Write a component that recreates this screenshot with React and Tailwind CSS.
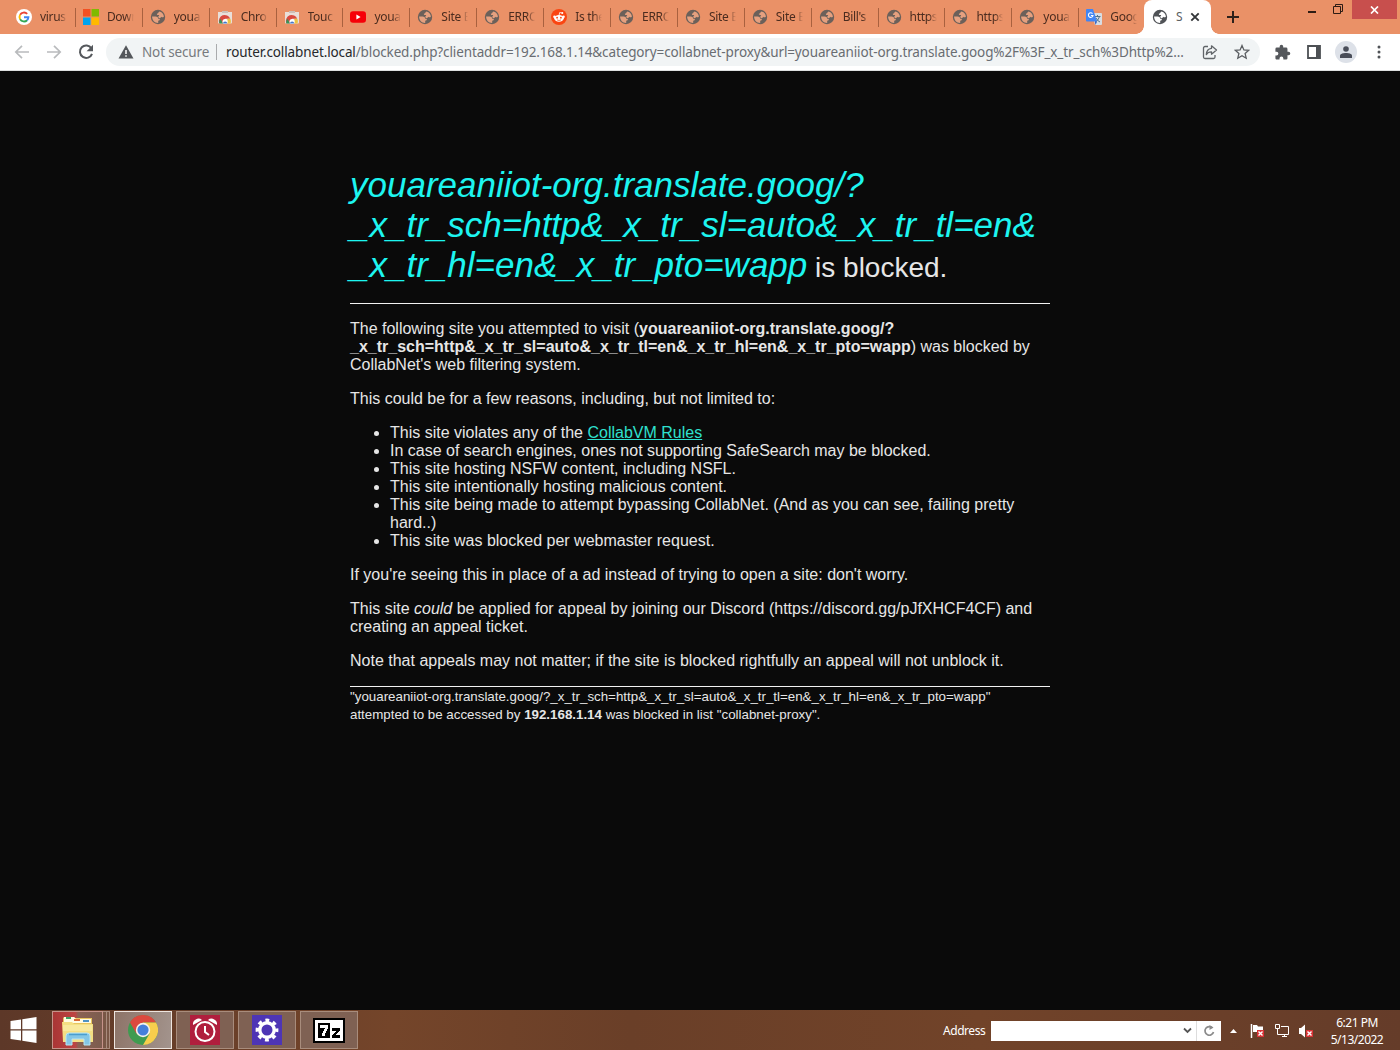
import React from "react";

const UI = "font-['Noto_Sans','Open_Sans',sans-serif]";

const GoogleG = () => (
  <svg width="16" height="16" viewBox="0 0 16 16"><circle cx="8" cy="8" r="8" fill="#fff" />
    <g fill="none" strokeWidth="1.9"><path d="M11.2 4.9A4.5 4.5 0 0 0 4.1 5.8" stroke="#ea4335" /><path d="M4.1 5.8a4.5 4.5 0 0 0 0 4.4" stroke="#fbbc05" /><path d="M4.1 10.2a4.5 4.5 0 0 0 7 1" stroke="#34a853" /><path d="M11.1 11.2A4.3 4.3 0 0 0 12.4 8.3H8" stroke="#4285f4" /></g>
  </svg>
);
const Microsoft = () => (
  <svg width="16" height="16" viewBox="0 0 16 16"><path d="M0 0h7.5v7.5H0z" fill="#f25022" /><path d="M8.5 0H16v7.5H8.5z" fill="#7fba00" /><path d="M0 8.5h7.5V16H0z" fill="#00a4ef" /><path d="M8.5 8.5H16V16H8.5z" fill="#ffb900" /></svg>
);
const Globe = ({ dark }) => (
  <svg width="16" height="16" viewBox="0 0 16 16">
    <circle cx="8" cy="8" r="7.2" fill={dark ? "#505357" : "#6b605a"} />
    <path d="M9.600 2.400C12.200 3 13.800 5.200 13.900 7.700c-.9.8-1.900.9-2.500.1-.7.9-1.700 1.700-2.700 1-.5-.5-.6-1.100-.1-1.700 1-.5.7-1.200-.4-1.200-.8.100-1.500-.3-1.300-1.200.9-.1 1.500-.5 1.500-1.200.1-.6.6-.9 1.200-1.100z" fill={dark ? "#fff" : "#e5a07f"} />
    <path d="M2.100 7.500h3.500c1.500 0 2.500.9 2.600 2.200h1.600c.3 1.300-.5 1.900-1.600 2v2.200C4.900 14 2 11.400 2.100 7.500z" fill={dark ? "#fff" : "#e5a07f"} />
  </svg>
);
const WebStore = () => (
  <svg width="16" height="16" viewBox="0 0 16 16"><path d="M1 3h14v10.500a1 1 0 0 1-1 1H2a1 1 0 0 1-1-1z" fill="#e9dfda" /><path d="M5 2h6v2H5z" fill="#cdbfb8" /><path d="M2.300 13.900a5.800 5.800 0 0 1 10.900-4.200H8.100l-2 4.200z" fill="#d94a40" /><path d="M2.300 14.500c-.2-2 .2-3.500 1.100-4.700l2.600 4.700z" fill="#36965a" /><path d="M13.300 9.700c.7 1.500.7 3.200.2 4.800H9.500l1-4.800z" fill="#edc241" /><circle cx="8.100" cy="12.500" r="2.600" fill="#fff" /><path d="M6 14.500a2.100 2.100 0 1 1 4.200 0z" fill="#4676c9" /></svg>
);
const YouTube = () => (
  <svg width="16" height="16" viewBox="0 0 16 16"><rect x="0" y="2.300" width="16" height="11.500" rx="3" fill="#f60008" /><path d="M6.400 5.600v4.900L10.600 8z" fill="#fff" /></svg>
);
const Reddit = () => (
  <svg width="16" height="16" viewBox="0 0 16 16"><circle cx="8" cy="8" r="8" fill="#fa4512" /><path d="M8 6.500l.7-3 2.300.5" stroke="#fff" strokeWidth=".8" fill="none" /><circle cx="11.300" cy="4" r="1" fill="#fff" /><circle cx="3.500" cy="7.700" r="1.300" fill="#fff" /><circle cx="12.500" cy="7.700" r="1.300" fill="#fff" /><ellipse cx="8" cy="9.300" rx="4.800" ry="3.400" fill="#fff" /><circle cx="6.100" cy="8.700" r=".9" fill="#fa4512" /><circle cx="9.900" cy="8.700" r=".9" fill="#fa4512" /><path d="M6 10.900q2 1.200 4 0" fill="none" stroke="#fa4512" strokeWidth=".7" /></svg>
);
const Translate = () => (
  <svg width="16" height="16" viewBox="0 0 16 16"><path d="M6 4h9a1 1 0 0 1 1 1v10a1 1 0 0 1-1 1H9z" fill="#d8dde3" /><path d="M8.500 7.500h6M11.500 6v1.500M13.500 7.500q-1 4-4 5M10 9q1.500 3 4 4" stroke="#55758c" fill="none" /><path d="M1 0h6l4 12.500H1a1 1 0 0 1-1-1V1a1 1 0 0 1 1-1z" fill="#4285f4" /><path d="M9 12.500h2L9.500 16z" fill="#2055c0" /><path d="M6.500 4.600A2.300 2.300 0 1 0 7 6.500H4.900" stroke="#fff" fill="none" strokeWidth="1.100" /></svg>
);

const tabs = [
  ["virus", GoogleG], ["Down", Microsoft], ["youa", Globe], ["Chro", WebStore], ["Touc", WebStore], ["youa", YouTube],
  ["Site B", Globe], ["ERRO", Globe], ["Is the", Reddit], ["ERRO", Globe], ["Site B", Globe], ["Site B", Globe],
  ["Bill's", Globe], ["https", Globe], ["https", Globe], ["youa", Globe], ["Goog", Translate],
];

function TabStrip() {
  return (
    <div className="flex h-[34px] bg-[#ea9167] pl-2">
      <div className="flex w-[1136px]">
        {tabs.map(([label, Icon], i) => (
          <div key={i} className="relative flex w-[66.900px] shrink-0 items-center pl-2 last:w-[64px]">
            <span className="h-4 w-4 shrink-0"><Icon /></span>
            <span className="ml-2 w-[27px] overflow-hidden text-[12px] leading-4 tracking-[-0.300px] whitespace-nowrap text-[#4b2c1f] [mask-image:linear-gradient(to_right,black_70%,transparent)]">{label}</span>
            {i < 16 && <span className="absolute -right-px top-2 h-[19px] w-px bg-[#a9613f]" />}
          </div>
        ))}
      </div>
      <div className="relative flex h-[34px] w-[67px] items-center rounded-t-lg bg-white pl-2">
        <span className="absolute bottom-0 -left-2 h-2 w-2 bg-[radial-gradient(circle_at_0_0,transparent_7.5px,white_8px)]" />
        <span className="absolute bottom-0 -right-2 h-2 w-2 bg-[radial-gradient(circle_at_100%_0,transparent_7.5px,white_8px)]" />
        <Globe dark />
        <span className="ml-2 w-[9px] text-[12px] leading-4 text-[#5c5f63]">S</span>
        <svg className="ml-[5px]" width="10" height="10" viewBox="0 0 10 10"><path d="M1.300 1.300l7.400 7.400M8.700 1.300L1.300 8.700" stroke="#333639" strokeWidth="1.900" /></svg>
      </div>
      <svg className="mt-[11px] ml-4" width="12" height="12" viewBox="0 0 12 12"><path d="M6 0v12M0 6h12" stroke="#2e211b" strokeWidth="2" /></svg>
      <div className="ml-[68px] flex">
        <svg className="mt-[11px]" width="10" height="3"><path d="M1 1h8" stroke="#2e1c14" strokeWidth="2" /></svg>
        <svg className="mt-1 ml-4" width="11" height="11" viewBox="0 0 11 11" fill="none" stroke="#2e1c14"><path d="M.5 2.500h7v7h-7zM2.500 2.500v-2h7v7h-2" /></svg>
      </div>
      <div className="ml-[8px] flex h-[19px] w-[45px] items-center justify-center bg-[#c84f4d]">
        <svg width="9" height="8" viewBox="0 0 9 8"><path d="M1 .5l7 7M8 .5l-7 7" stroke="#fff" strokeWidth="1.700" /></svg>
      </div>
    </div>
  );
}

function Toolbar() {
  return (
    <div className="flex h-[37px] items-center border-b border-[#dde0e0] bg-white">
      <svg className="ml-[14px]" width="16" height="16" viewBox="0 0 16 16" fill="none" stroke="#b9bbbd" strokeWidth="1.700"><path d="M15 8H2M8 1.800L1.800 8 8 14.200" /></svg>
      <svg className="ml-4" width="16" height="16" viewBox="0 0 16 16" fill="none" stroke="#b9bbbd" strokeWidth="1.700"><path d="M1 8h13M8 1.800L14.200 8 8 14.200" /></svg>
      <svg className="ml-4" width="16" height="16" viewBox="0 0 16 16"><path d="M13.400 4.400A6.200 6.200 0 1 0 14 9.800" fill="none" stroke="#55585c" strokeWidth="2" /><path d="M15 .8v6.400H8.600z" fill="#55585c" /></svg>
      <div className="ml-3 flex h-7 w-[1154px] items-center rounded-full bg-[#f1f4f5] pl-3">
        <svg width="16" height="14" viewBox="0 0 16 14"><path d="M8 .3L15.500 13.500H.5z" fill="#54575b" /><path d="M8 5v4M8 10.200v1.600" stroke="#fff" strokeWidth="1.500" /></svg>
        <span className="ml-2 w-[67px] pt-px text-[13.500px] tracking-[-0.150px] whitespace-nowrap text-[#777a7e]">Not secure</span>
        <span className="ml-[7px] h-4 w-px bg-[#a9abad]" />
        <span className="ml-[9px] w-[960px] pt-px text-[13.500px] tracking-[-0.125px] whitespace-nowrap text-[#696d72]"><span className="text-[#27292c]">router.collabnet.local</span>/blocked.php?clientaddr=192.168.1.14&amp;category=collabnet-proxy&amp;url=youareaniiot-org.translate.goog%2F%3F_x_tr_sch%3Dhttp%2...</span>
        <svg className="ml-4" width="16" height="16" viewBox="0 0 16 16" fill="none" stroke="#606468" strokeWidth="1.300"><path d="M6 2.500H3a1.500 1.500 0 0 0-1.500 1.500v9A1.500 1.500 0 0 0 3 14.500h8.500A1.500 1.500 0 0 0 13 13v-2" /><path d="M9.500 1.800l5 4.200-5 4.200V7.800Q6 7.700 4.300 10.600 4.500 5 9.500 4.300z" strokeLinejoin="round" /></svg>
        <svg className="ml-4" width="16" height="16" viewBox="0 0 16 16"><path d="M8 1.500l1.900 4.400 4.800.4-3.600 3.200 1.100 4.700L8 11.700l-4.200 2.500 1.100-4.700-3.600-3.200 4.800-.4z" fill="none" stroke="#5b5e62" strokeWidth="1.300" /></svg>
      </div>
      <svg className="ml-[14px]" width="17" height="17" viewBox="0 0 24 24" fill="#55585c"><path d="M20.500 11H19V7a2 2 0 0 0-2-2h-4V3.500a2.500 2.500 0 0 0-5 0V5H4a2 2 0 0 0-2 2v3.800h1.500a2.700 2.700 0 0 1 0 5.400H2V20c0 1.100.9 2 2 2h3.800v-1.500a2.700 2.700 0 0 1 5.400 0V22H17a2 2 0 0 0 2-2v-4h1.500a2.500 2.500 0 0 0 0-5z" /></svg>
      <svg className="ml-4" width="14" height="14" viewBox="0 0 14 14"><path d="M1 1h12v12H1z" fill="none" stroke="#4d5054" strokeWidth="1.800" /><path d="M9 1h4v12H9z" fill="#4d5054" /></svg>
      <span className="ml-[14px] flex h-[22px] w-[22px] items-center justify-center rounded-full bg-[#dde1e8]">
        <svg width="12" height="12" viewBox="0 0 12 12" fill="#4a4e59"><circle cx="6" cy="3" r="2.800" /><path d="M0 12V9.700C0 7.800 3 7 6 7s6 .8 6 2.700V12z" /></svg>
      </span>
      <svg className="ml-5" width="4" height="14" viewBox="0 0 4 14" fill="#505357"><circle cx="2" cy="2" r="1.500" /><circle cx="2" cy="7" r="1.500" /><circle cx="2" cy="12" r="1.500" /></svg>
    </div>
  );
}

function BlockedPage() {
  return (
    <main className="h-[939px] bg-[#0a0a0a] pt-[94px] font-['Liberation_Sans',Arial,sans-serif] text-[16px] leading-[18px] text-[#e6e6e6]">
      <div className="mx-auto w-[700px]">
        <h1 className="text-[35px] leading-[40px] whitespace-nowrap"><em className="text-[#1df5f0]">youareaniiot-org.translate.goog/?<br />_x_tr_sch=http&amp;_x_tr_sl=auto&amp;_x_tr_tl=en&amp;<br />_x_tr_hl=en&amp;_x_tr_pto=wapp</em><span className="text-[28px] leading-none"> is blocked.</span></h1>
        <hr className="mt-[18px] border-t border-[#f2f2f2]" />
        <p className="mt-4 whitespace-nowrap">The following site you attempted to visit (<b>youareaniiot-org.translate.goog/?<br />_x_tr_sch=http&amp;_x_tr_sl=auto&amp;_x_tr_tl=en&amp;_x_tr_hl=en&amp;_x_tr_pto=wapp</b>) was blocked by<br />CollabNet's web filtering system.</p>
        <p className="mt-4">This could be for a few reasons, including, but not limited to:</p>
        <ul className="mt-4 list-disc pl-10">
          <li>This site violates any of the <a className="text-[#2fe0cf] underline">CollabVM Rules</a></li>
          <li>In case of search engines, ones not supporting SafeSearch may be blocked.</li>
          <li>This site hosting NSFW content, including NSFL.</li>
          <li>This site intentionally hosting malicious content.</li>
          <li>This site being made to attempt bypassing CollabNet. (And as you can see, failing pretty<br />hard..)</li>
          <li>This site was blocked per webmaster request.</li>
        </ul>
        <p className="mt-4">If you're seeing this in place of a ad instead of trying to open a site: don't worry.</p>
        <p className="mt-4">This site <em>could</em> be applied for appeal by joining our Discord (https://discord.gg/pJfXHCF4CF) and<br />creating an appeal ticket.</p>
        <p className="mt-4">Note that appeals may not matter; if the site is blocked rightfully an appeal will not unblock it.</p>
        <hr className="mt-4 border-t border-[#f2f2f2]" />
        <p className="mt-px text-[13.333px] whitespace-nowrap">"youareaniiot-org.translate.goog/?_x_tr_sch=http&amp;_x_tr_sl=auto&amp;_x_tr_tl=en&amp;_x_tr_hl=en&amp;_x_tr_pto=wapp"<br />attempted to be accessed by <b>192.168.1.14</b> was blocked in list "collabnet-proxy".</p>
      </div>
    </main>
  );
}

const TaskButton = ({ children, active }) => (
  <div className={active ? "flex h-[38px] w-[58px] items-center justify-center border border-[#eee5df] bg-[linear-gradient(100deg,#8d7468,#a3948d)]" : "flex h-[38px] w-[58px] items-center justify-center border border-[#a88c7c] bg-[#7f6153]"}>{children}</div>
);

function Taskbar() {
  return (
    <footer className="flex h-10 items-center bg-[#693f2a] bg-[linear-gradient(90deg,#5d3828,#74452a_28%,#6a3f28_45%,#714329_70%,#653c29)]">
      <svg className="ml-[10px]" width="27" height="26" viewBox="0 0 27 26" fill="#fff"><path d="M.5 4L11 2.400V12.300H.5zM12.300 2.200L26.500 0v12.300H12.300zM.5 13.500H11v10L.5 22zM12.300 13.500h14.200V26l-14.200-2.200z" /></svg>
      <div className="ml-[15px] flex h-[38px] w-[58px]">
        <div className="flex w-[51px] items-center justify-center border border-[#c5938a] bg-[linear-gradient(90deg,#a93635,#bd4442_45%,#8a6253_52%,#7c5c4e)]">
          <svg width="34" height="32" viewBox="0 0 34 32"><path d="M2 4l1-1h10l1 1h17v24H2z" fill="#e8c65e" /><path d="M3 3h10l2 2h15v4H3z" fill="#fffbe3" /><path d="M5 3h5v2H5z" fill="#3da363" /><path d="M13 5h6v2h-6z" fill="#d96a34" /><path d="M22 6h6v2h-6z" fill="#4d92c4" /><path d="M1 8h10l2 2h19v18H2z" fill="#f4df83" /><path d="M2 11h29v6H2z" fill="#f8e99d" /><path d="M5 31V22q0-3 3-3h18q3 0 3 3v9h-6v-6H11v6z" fill="#83c6e6" stroke="#b9e5f2" /><path d="M8 20.500h18" stroke="#4a9dce" strokeWidth="1.500" /></svg>
        </div>
        <div className="w-1 border-y border-r border-[#a98c7d] bg-[#795746]" />
        <div className="w-[3px] border-y border-r border-[#a98c7d] bg-[#795746]" />
      </div>
      <div className="ml-1 flex gap-1">
        <TaskButton active>
          <svg width="30" height="30" viewBox="0 0 30 30"><circle cx="15" cy="15" r="15" fill="#3f9b50" /><path d="M2 7.500A15 15 0 0 1 28 7.500H15L8.500 18.800z" fill="#dc493e" /><path d="M28 7.500A15 15 0 0 1 15 30l6.500-11.300L15 7.500z" fill="#f7ce4d" /><circle cx="15" cy="15" r="7.200" fill="#f5f2ec" /><circle cx="15" cy="15" r="5.600" fill="#457fda" /></svg>
        </TaskButton>
        <TaskButton><svg width="30" height="30" viewBox="0 0 30 30"><path fill="#b01e3d" d="M0 0h30v30H0z" /><g fill="none" stroke="#fff" strokeWidth="2"><circle cx="15" cy="16.500" r="9.500" /><path d="M15 11v6l4 3" /></g><path d="M3 10a5.500 5.500 0 0 1 9-5zM27 10a5.500 5.500 0 0 0-9-5z" fill="#fff" /></svg></TaskButton>
        <TaskButton><svg width="30" height="30" viewBox="0 0 30 30"><path fill="#4e35b5" d="M0 0h30v30H0z" /><circle cx="15" cy="15" r="7.200" fill="none" stroke="#fff" strokeWidth="3.400" /><circle cx="15" cy="15" r="9.700" fill="none" stroke="#fff" strokeWidth="3.400" strokeDasharray="3.809 3.809" strokeDashoffset="1.900" /></svg></TaskButton>
        <TaskButton><svg width="32" height="25" viewBox="0 0 32 25" shapeRendering="crispEdges"><path fill="#000" d="M0 0h32v25H0z" /><path fill="#fff" d="M2 2h28v21H2z" /><path fill="#000" d="M5 5h12v15H5z" /><path d="M7 7h8v4h-1v2h-1v2h-1v3H9v-3h1v-2h1v-2h1v-1H7z" fill="#fff" /><path d="M19 10h8v3h-1v1h-1v1h-1v1h-1v1h4v3h-8v-3h1v-1h1v-1h1v-1h1v-1h-4z" fill="#000" /></svg></TaskButton>
      </div>
      <span className="ml-[585px] w-[48px] pt-px text-[12px] tracking-[-0.45px] whitespace-nowrap text-white">Address</span>
      <div className="mt-px flex h-5 w-[230px] items-center bg-white">
        <svg className="ml-[192px]" width="9" height="7" viewBox="0 0 9 7"><path d="M1 1.500l3.500 3.500L8 1.500" fill="none" stroke="#555" strokeWidth="1.800" /></svg>
        <span className="ml-1 h-5 w-px bg-[#ddd]" />
        <svg className="ml-[6px]" width="12" height="12" viewBox="0 0 12 12"><path d="M9.500 3A4.300 4.300 0 1 0 10.500 7" fill="none" stroke="#8b8b8b" strokeWidth="1.700" /><path d="M6.500 0v5l4-2.500z" fill="#8b8b8b" /></svg>
      </div>
      <svg className="mt-0.5 ml-[9px]" width="7" height="4"><path d="M0 4l3.500-4L7 4z" fill="#fff" /></svg>
      <svg className="mt-px ml-[12px]" width="16" height="16" viewBox="0 0 16 16"><path d="M2.500 1v14" stroke="#fff" strokeWidth="1.500" /><path d="M4 2h4l1 1.500h5V9H4z" fill="#fff" /><path d="M8 7h7v7H8z" fill="#d93336" /><path d="M9.500 8.500l4 4M13.500 8.500l-4 4" stroke="#fff" strokeWidth="1.400" /></svg>
      <svg className="mt-px ml-[9px]" width="16" height="16" viewBox="0 0 16 16" fill="none" stroke="#fff"><path d="M7 3.500h7.500v8H6M8 13.500h5M10.500 11.500v2M1.500 1.500h4v4h-4zM3.500 5.500v6h3" /></svg>
      <svg className="mt-px ml-2" width="16" height="16" viewBox="0 0 16 16"><path d="M1 5h2l4-3.500v13L3 11H1z" fill="#fff" /><path d="M8 7h7v7H8z" fill="#d93336" /><path d="M9.500 8.500l4 4M13.500 8.500l-4 4" stroke="#fff" strokeWidth="1.400" /></svg>
      <div className="ml-[8px] flex w-[70px] flex-col pt-[1px] text-center text-[12px] leading-[17px] tracking-[-0.5px] text-white"><span>6:21 PM</span><span>5/13/2022</span></div>
    </footer>
  );
}

export default function App() {
  return <div className={UI + " h-[1050px] w-[1400px] overflow-hidden"}><TabStrip /><Toolbar /><BlockedPage /><Taskbar /></div>;
}
